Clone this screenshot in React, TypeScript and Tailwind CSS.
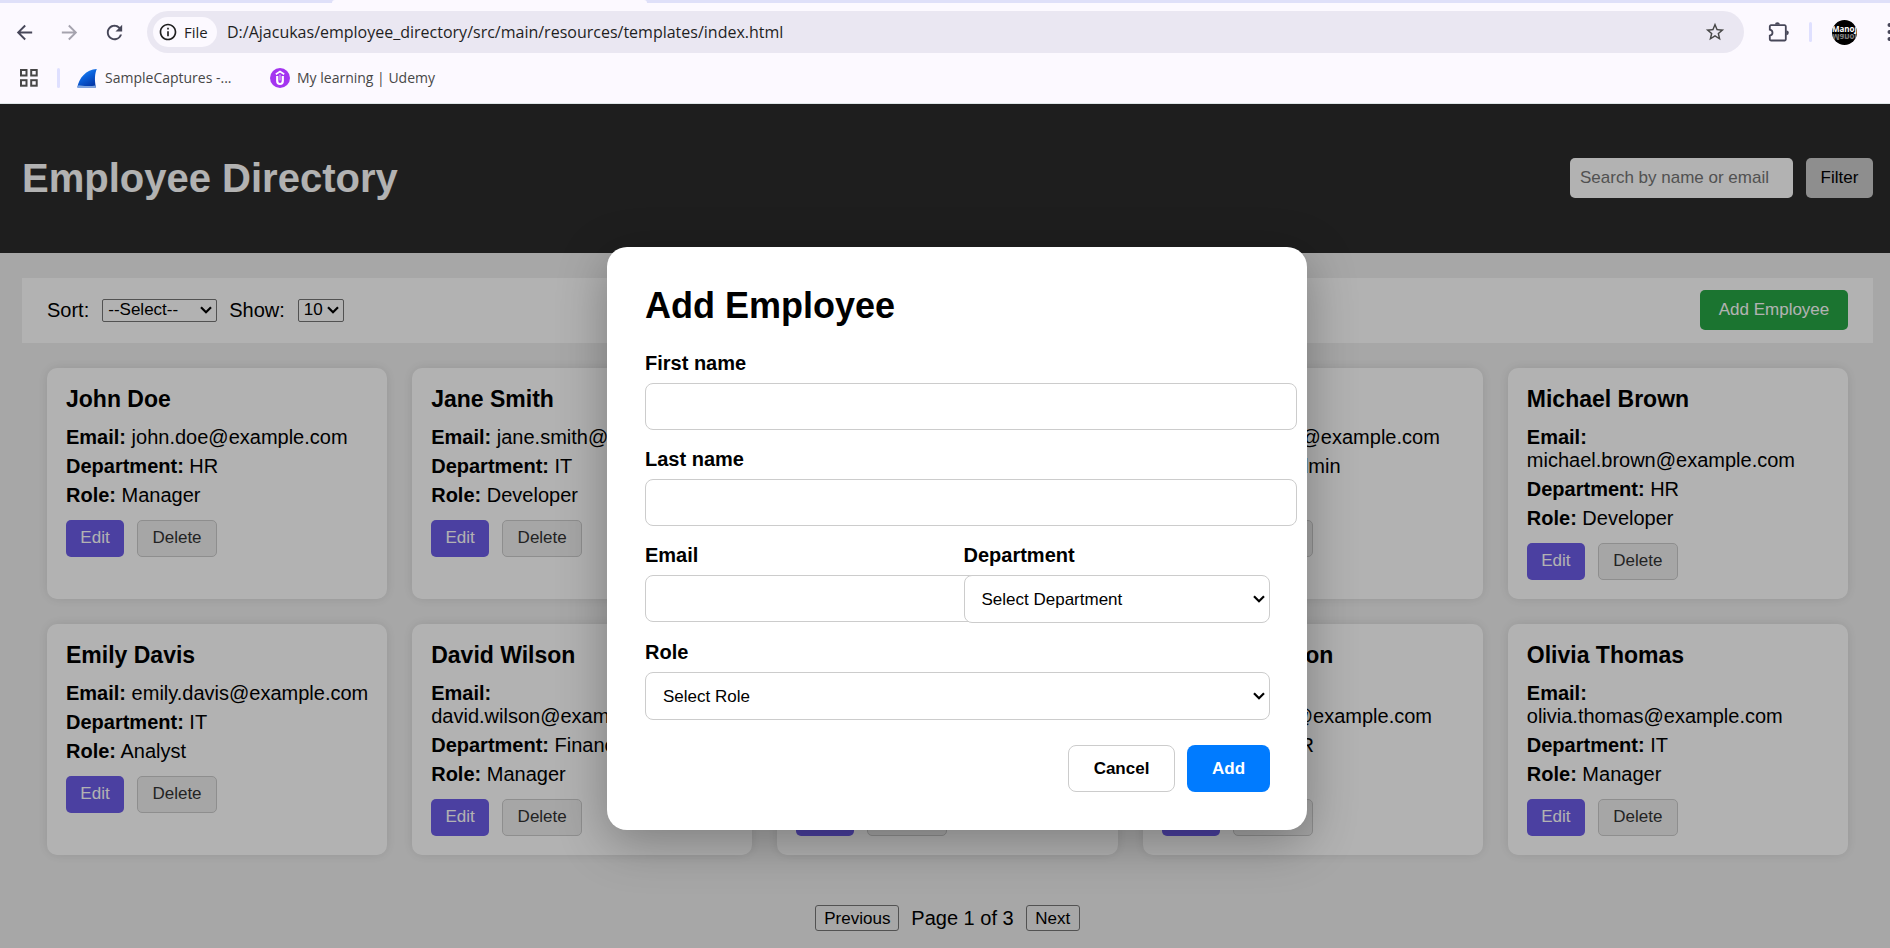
import React from "react";
import { MdArrowBack, MdArrowForward, MdRefresh, MdInfoOutline, MdStarBorder } from "react-icons/md";

type Employee = {
  name: string;
  email: string;
  department: string;
  role: string;
};

const employees: Employee[] = [
  { name: "John Doe", email: "john.doe@example.com", department: "HR", role: "Manager" },
  { name: "Jane Smith", email: "jane.smith@example.com", department: "IT", role: "Developer" },
  { name: "Robert Clark", email: "robert.clark@example.com", department: "Finance", role: "Analyst" },
  { name: "Alice Lee", email: "alice.lee@example.com", department: "Admin", role: "Manager" },
  { name: "Michael Brown", email: "michael.brown@example.com", department: "HR", role: "Developer" },
  { name: "Emily Davis", email: "emily.davis@example.com", department: "IT", role: "Analyst" },
  { name: "David Wilson", email: "david.wilson@example.com", department: "Finance", role: "Manager" },
  { name: "Sophia Martin", email: "sophia.martin@example.com", department: "Admin", role: "Developer" },
  { name: "Chris Anderson", email: "chris.anderson@example.com", department: "HR", role: "Analyst" },
  { name: "Olivia Thomas", email: "olivia.thomas@example.com", department: "IT", role: "Manager" },
];

function PuzzleIcon() {
  return (
    <svg width="22" height="24" viewBox="0 0 22 24" fill="none" aria-hidden="true">
      <path
        d="M3 5.2h13.6a1.2 1.2 0 0 1 1.2 1.2v12.900a1.200 1.200 0 0 1-1.200 1.200H3a1.200 1.200 0 0 1-1.200-1.200v-3.600c1.700-.4 2.700-1.500 2.700-3s-1-2.600-2.700-3V6.400A1.200 1.200 0 0 1 3 5.200z"
        stroke="#474759"
        strokeWidth="1.8"
      />
      <path d="M7 4.600a2.400 2.400 0 0 1 4.800 0z" fill="#474759" />
      <path d="M18.400 10.400a2.400 2.400 0 0 1 0 4.800z" fill="#474759" />
    </svg>
  );
}

function AppsIcon() {
  return (
    <svg width="18" height="18" viewBox="0 0 18 18" fill="none" stroke="#474747" strokeWidth="2" aria-hidden="true">
      <rect x="1" y="1" width="5.500" height="5.500" />
      <rect x="11.200" y="1" width="5.500" height="5.500" />
      <rect x="1" y="11.200" width="5.500" height="5.500" />
      <rect x="11.200" y="11.200" width="5.500" height="5.500" />
    </svg>
  );
}

function FinIcon() {
  return (
    <svg width="20" height="20" viewBox="0 0 20 20" aria-hidden="true">
      <defs>
        <linearGradient id="fin" x1="0" y1="0" x2="0.6" y2="1">
          <stop offset="0" stopColor="#2f9bff" />
          <stop offset="0.500" stopColor="#0b62dc" />
          <stop offset="1" stopColor="#0538a8" />
        </linearGradient>
      </defs>
      <path d="M0.300 19.500C2 10 9 1.500 19.800 1c-2 4.500-2.500 11-.8 18.500z" fill="url(#fin)" />
      <path d="M0.300 19.500l1.200-2.300c4 1 13 1 17 .2l.5 2.100z" fill="#7fa6e0" />
    </svg>
  );
}

function UdemyIcon() {
  return (
    <svg width="20" height="20" viewBox="0 0 20 20" aria-hidden="true">
      <circle cx="10" cy="10" r="10" fill="#a435f0" />
      <path d="M5.800 6.300L10 3.600l4.200 2.700" fill="none" stroke="#fff" strokeWidth="1.700" />
      <path d="M7.200 8v5a2.800 3 0 0 0 5.600 0V8" fill="none" stroke="#fff" strokeWidth="2.200" />
      <path d="M10 6.500v6" stroke="#e3c2fb" strokeWidth="1" />
    </svg>
  );
}

function Avatar() {
  return (
    <svg width="25" height="25" viewBox="0 0 25 25" aria-hidden="true">
      <clipPath id="avatar">
        <circle cx="12.500" cy="12.500" r="12.500" />
      </clipPath>
      <g clipPath="url(#avatar)">
        <rect width="25" height="25" fill="#000" />
        <text x="12.500" y="12" textAnchor="middle" fontSize="8" fontWeight="700" fontFamily="Open Sans, sans-serif" fill="#fff">
          Manoj
        </text>
        <g transform="matrix(1 0 0 -1 0 26)" opacity="0.500">
          <text x="12.500" y="12" textAnchor="middle" fontSize="8" fontWeight="700" fontFamily="Open Sans, sans-serif" fill="#fff">
            Manoj
          </text>
        </g>
      </g>
    </svg>
  );
}

function BrowserChrome() {
  return (
    <div className="overflow-hidden border-b border-[#dfe6e8] bg-[#fcf9ff] font-['Open_Sans',sans-serif]">
      <div className="flex h-[3px] bg-[#dfe0f9]">
        <div className="ml-[332px] w-[315px] rounded-t bg-[#fcf9ff]" />
      </div>
      <div className="flex h-[50px] items-center pt-2">
        <div className="flex w-[147px] items-center gap-[22px] pl-[13px]">
          <button aria-label="Back" className="text-[#474759]"><MdArrowBack size={23} /></button>
          <button aria-label="Forward" className="text-[#a5a3ae]"><MdArrowForward size={23} /></button>
          <button aria-label="Reload" className="text-[#474759]"><MdRefresh size={23} /></button>
        </div>
        <div className="flex h-[42px] min-w-0 flex-1 items-center rounded-full bg-[#eae7f2] pr-[18px] pl-1.5">
          <div className="flex h-[30px] w-16 items-center gap-1.5 rounded-full bg-[#fcf9ff] pl-[5px] text-[15px] font-medium text-[#1f1f1f]">
            <MdInfoOutline size={20} />
            File
          </div>
          <div className="flex-1 pl-2.5 text-[16px] whitespace-nowrap text-[#1f1f1f]">
            D:/Ajacukas/employee_directory/src/main/resources/templates/index.html
          </div>
          <button aria-label="Bookmark" className="text-[#474747]"><MdStarBorder size={22} /></button>
        </div>
        <div className="flex w-[146px] shrink-0 items-center pl-6">
          <button aria-label="Extensions" className="shrink-0"><PuzzleIcon /></button>
          <div className="ml-[19px] h-5 w-[3px] shrink-0 rounded-full bg-[#dfe0ff]" />
          <button aria-label="Profile" className="ml-5 shrink-0"><Avatar /></button>
          <button aria-label="Menu" className="ml-[30px] shrink-0">
            <svg width="6" height="20" viewBox="0 0 6 20" fill="#474759" aria-hidden="true">
              <circle cx="2.500" cy="3" r="2" />
              <circle cx="2.500" cy="10" r="2" />
              <circle cx="2.500" cy="17" r="2" />
            </svg>
          </button>
        </div>
      </div>
      <div className="flex h-[50px] items-center pb-px pl-5 text-[14px] text-[#474747]">
        <button aria-label="Apps"><AppsIcon /></button>
        <div className="ml-[19px] h-5 w-[3px] rounded-full bg-[#dfe0ff]" />
        <a href="#captures" className="ml-[17px] flex w-[193px] items-center gap-2 whitespace-nowrap">
          <FinIcon />
          SampleCaptures -...
        </a>
        <a href="#udemy" className="flex items-center gap-[7px] whitespace-nowrap">
          <UdemyIcon />
          My learning | Udemy
        </a>
      </div>
    </div>
  );
}

type PickerProps = {
  id: string;
  option: string;
  boxClass?: string;
  selectClass: string;
};

function Picker({ id, option, boxClass = "", selectClass }: PickerProps) {
  return (
    <div className={`relative flex items-center ${boxClass}`}>
      <select id={id} className={`w-full appearance-none border bg-white text-[17px] ${selectClass}`}>
        <option>{option}</option>
      </select>
      <svg
        className="pointer-events-none absolute right-[5px]"
        width="12"
        height="8"
        viewBox="0 0 12 8"
        fill="none"
        stroke="#000"
        strokeWidth="2.200"
        aria-hidden="true"
      >
        <path d="M1 1.200l5 5 5-5" />
      </svg>
    </div>
  );
}

function EmployeeCard({ employee }: { employee: Employee }) {
  return (
    <article className="rounded-[10px] bg-white py-[19px] pr-[18px] pl-[19px] shadow-[0_0_12px_rgba(0,0,0,0.1)]">
      <h3 className="mb-[15px] text-[23px] leading-6 font-bold">{employee.name}</h3>
      <div className="flex flex-col gap-1.5">
        <p><strong>Email:</strong> {employee.email}</p>
        <p><strong>Department:</strong> {employee.department}</p>
        <p><strong>Role:</strong> {employee.role}</p>
      </div>
      <div className="mt-[13px] flex gap-[13px] text-[17px]">
        <button className="h-[37px] w-[58px] rounded-[5px] bg-[#6c5ce7] pb-[3px] text-white">Edit</button>
        <button className="h-[37px] w-20 rounded-[5px] border border-[#ccc] bg-[#eee] pb-[3px] text-[#333]">Delete</button>
      </div>
    </article>
  );
}

const field = "block h-[47px] w-[calc(100%+27px)] rounded-lg border border-[#ccc] bg-white px-[15px] text-[17px]";
const formPicker = "h-12 rounded-lg border-[#ccc] px-[17px]";
const fieldLabel = "mb-2 block font-bold";

function AddEmployeeDialog() {
  return (
    <div className="absolute inset-0 flex items-start justify-center bg-black/30 pt-[143px] pl-6">
      <form
        role="dialog"
        aria-labelledby="dialog-title"
        className="w-[700px] rounded-[20px] bg-white p-[38px] pr-[37px] shadow-[0_12px_50px_rgba(0,0,0,0.3)]"
        onSubmit={(event) => event.preventDefault()}
      >
        <h2 id="dialog-title" className="mb-[26px] text-[36px] leading-[41px] font-bold">Add Employee</h2>
        <div className="flex flex-col gap-[18px]">
          <div>
            <label htmlFor="first" className={fieldLabel}>First name</label>
            <input id="first" type="text" className={field} />
          </div>
          <div>
            <label htmlFor="last" className={fieldLabel}>Last name</label>
            <input id="last" type="text" className={field} />
          </div>
          <div className="flex gap-3">
            <div className="flex-1">
              <label htmlFor="email" className={fieldLabel}>Email</label>
              <input id="email" type="email" className={field} />
            </div>
            <div className="flex-1">
              <label htmlFor="department" className={fieldLabel}>Department</label>
              <Picker id="department" option="Select Department" selectClass={formPicker} />
            </div>
          </div>
          <div>
            <label htmlFor="role" className={fieldLabel}>Role</label>
            <Picker id="role" option="Select Role" selectClass={formPicker} />
          </div>
        </div>
        <div className="mt-[25px] flex justify-end gap-3 text-[17px] font-bold">
          <button type="button" className="h-[47px] w-[107px] rounded-lg border border-[#ccc] bg-white">Cancel</button>
          <button type="submit" className="h-[47px] w-[83px] rounded-lg bg-[#007bff] text-white">Add</button>
        </div>
      </form>
    </div>
  );
}

export default function App() {
  return (
    <div className="flex min-h-screen flex-col bg-[#f0f0f0] font-['Liberation_Sans',Arial,sans-serif] text-[20px] leading-[23px] text-black">
      <BrowserChrome />
      <div className="relative flex-1">
        <header className="flex h-[149px] items-center justify-between bg-[#2c2c2c] pr-[17px] pb-px pl-[22px]">
          <h1 className="text-[40px] leading-[46px] font-bold text-white">Employee Directory</h1>
          <div className="flex gap-[13px] text-[17px]">
            <input
              type="search"
              aria-label="Search employees"
              placeholder="Search by name or email"
              className="h-10 w-[223px] rounded-[5px] bg-white pb-px pl-2.5 placeholder:text-[#757575]"
            />
            <button className="h-10 w-[67px] rounded-[5px] bg-[#ccc] pb-0.5">Filter</button>
          </div>
        </header>
        <main className="pt-[25px] pr-[17px] pb-[17px] pl-[22px]">
          <div className="flex h-[65px] items-center bg-white px-[25px] pb-px">
            <label htmlFor="sort">Sort:</label>
            <Picker id="sort" option="--Select--" boxClass="ml-[13px] w-[115px]" selectClass="h-[23px] rounded-[2px] border-[#767676] px-[5px] leading-5" />
            <label htmlFor="show" className="ml-3">Show:</label>
            <Picker id="show" option="10" boxClass="ml-[13px] w-[46px]" selectClass="h-[23px] rounded-[2px] border-[#767676] px-[5px] leading-5" />
            <button className="ml-auto h-10 w-[148px] rounded-[5px] bg-[#28a745] pb-0.5 text-[17px] text-white">Add Employee</button>
          </div>
          <section className="grid grid-cols-5 gap-[25px] p-[25px]">
            {employees.map((employee) => (
              <EmployeeCard key={employee.email} employee={employee} />
            ))}
          </section>
          <nav className="mt-[25px] flex items-center justify-center gap-3">
            <button className="h-[26px] w-[84px] rounded-[3px] border border-[#767676] bg-[#efefef] text-[17px]">Previous</button>
            <span>Page 1 of 3</span>
            <button className="h-[26px] w-[54px] rounded-[3px] border border-[#767676] bg-[#efefef] text-[17px]">Next</button>
          </nav>
        </main>
        <AddEmployeeDialog />
      </div>
    </div>
  );
}
